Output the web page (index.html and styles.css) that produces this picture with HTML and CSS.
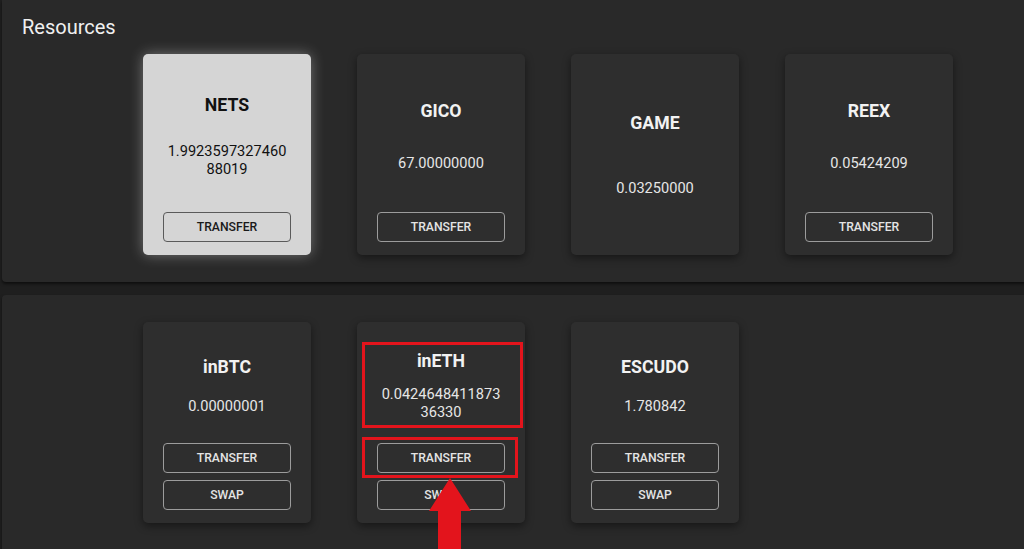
FILE: index.html
```html
<!DOCTYPE html>
<html lang="en">
<head>
<meta charset="utf-8">
<title>Resources</title>
<link rel="stylesheet" href="styles.css">
</head>
<body>
<div class="page">
  <section class="panel panel-top">
    <h2 class="panel-title">Resources</h2>
    <div class="cards">
      <div class="card card-selected">
        <div class="card-body">
          <div class="card-title">NETS</div>
          <div class="card-value">1.992359732746088019</div>
        </div>
        <div class="card-actions">
          <button class="btn">Transfer</button>
        </div>
      </div>
      <div class="card">
        <div class="card-body">
          <div class="card-title">GICO</div>
          <div class="card-value">67.00000000</div>
        </div>
        <div class="card-actions">
          <button class="btn">Transfer</button>
        </div>
      </div>
      <div class="card">
        <div class="card-body">
          <div class="card-title">GAME</div>
          <div class="card-value">0.03250000</div>
        </div>
      </div>
      <div class="card">
        <div class="card-body">
          <div class="card-title">REEX</div>
          <div class="card-value">0.05424209</div>
        </div>
        <div class="card-actions">
          <button class="btn">Transfer</button>
        </div>
      </div>
    </div>
  </section>

  <section class="panel panel-bottom">
    <div class="cards">
      <div class="card">
        <div class="card-body">
          <div class="card-title">inBTC</div>
          <div class="card-value">0.00000001</div>
        </div>
        <div class="card-actions">
          <button class="btn">Transfer</button>
          <button class="btn">Swap</button>
        </div>
      </div>
      <div class="card card-annotated">
        <div class="card-body">
          <div class="card-title">inETH</div>
          <div class="card-value">0.042464841187336330</div>
        </div>
        <div class="card-actions">
          <button class="btn">Transfer</button>
          <button class="btn">Swap</button>
        </div>
        <div class="mark mark-info"></div>
        <div class="mark mark-button"></div>
        <svg class="arrow" width="44" height="75" viewBox="0 0 44 75" aria-hidden="true">
          <polygon points="22,0 43,33 33,33 33,75 10,75 10,33 1,33" fill="#e3141c"/>
        </svg>
      </div>
      <div class="card">
        <div class="card-body">
          <div class="card-title">ESCUDO</div>
          <div class="card-value">1.780842</div>
        </div>
        <div class="card-actions">
          <button class="btn">Transfer</button>
          <button class="btn">Swap</button>
        </div>
      </div>
    </div>
  </section>
</div>
</body>
</html>
```

FILE: styles.css
```css
* {
  box-sizing: border-box;
}

html, body {
  margin: 0;
  padding: 0;
}

body {
  background: #1f1f1f;
  font-family: Roboto, "Liberation Sans", Arial, sans-serif;
  color: #ececec;
  width: 1024px;
  height: 549px;
  overflow: hidden;
}

.page {
  display: flex;
  flex-direction: column;
  gap: 13px;
  padding-left: 2px;
  height: 549px;
  overflow: hidden;
}

.panel {
  background: #292929;
  margin-right: -12px;
  border-radius: 4px;
  box-shadow: 0 2px 3px rgba(0, 0, 0, 0.55);
}

.panel-top {
  padding: 15px 0 27px 20px;
  border-top-left-radius: 0;
  border-top-right-radius: 0;
}

.panel-bottom {
  padding: 27px 0 40px 20px;
}

.panel-title {
  margin: 0 0 15px;
  font-size: 20px;
  line-height: 24px;
  font-weight: 400;
  color: #f0f0f0;
}

.cards {
  display: flex;
  gap: 46px;
  padding-left: 121px;
}

.card {
  position: relative;
  width: 168px;
  height: 201px;
  padding: 14px 20px 13px;
  background: #2e2e2e;
  border-radius: 5px;
  box-shadow: 0 3px 8px rgba(0, 0, 0, 0.45);
  display: flex;
  flex-direction: column;
}

.card-body {
  flex: 1;
  display: flex;
  flex-direction: column;
  justify-content: space-evenly;
  align-items: center;
  text-align: center;
}

.card-title {
  font-size: 17.7px;
  line-height: 20px;
  font-weight: 700;
  color: #f2f2f2;
}

.card-value {
  font-size: 14.6px;
  line-height: 18px;
  max-width: 124px;
  word-break: break-all;
  color: #e6e6e6;
}

.card-actions {
  display: flex;
  flex-direction: column;
  gap: 7px;
  margin-top: 7px;
}

.btn {
  height: 30px;
  width: 100%;
  background: transparent;
  border: 1px solid #9c9c9c;
  border-radius: 4px;
  color: #e4e4e4;
  font-family: Roboto, "Liberation Sans", Arial, sans-serif;
  font-size: 12.2px;
  font-weight: 500;
  text-transform: uppercase;
  padding: 0;
}

.card-selected {
  background: #d5d5d5;
  box-shadow: 0 0 14px rgba(255, 255, 255, 0.35);
}

.card-selected .card-title,
.card-selected .card-value {
  color: #111;
}

.card-selected .btn {
  border-color: #5a5a5a;
  color: #1a1a1a;
}

.mark {
  position: absolute;
  border: 3px solid #e3141c;
}

.mark-info {
  left: 5px;
  top: 20px;
  width: 161px;
  height: 86px;
}

.mark-button {
  left: 5px;
  top: 115px;
  width: 156px;
  height: 41px;
}

.arrow {
  position: absolute;
  left: 71px;
  top: 156px;
}
```
